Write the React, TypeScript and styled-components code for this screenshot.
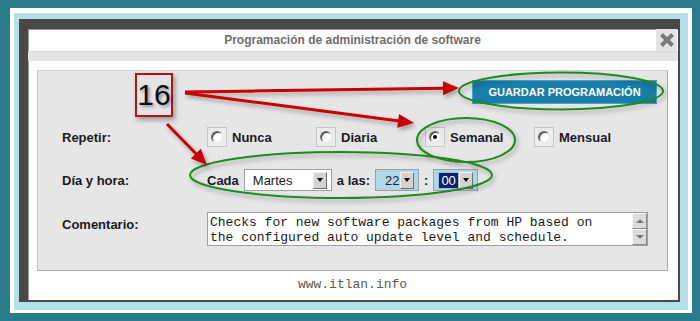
import styled, { createGlobalStyle } from "styled-components";

const GlobalStyle = createGlobalStyle`
  html, body {
    margin: 0;
    padding: 0;
    background: #2a7c8b;
  }
  * {
    box-sizing: border-box;
  }
`;

const Page = styled.div`
  position: relative;
  width: 700px;
  height: 321px;
  background: #2a7c8b;
  padding: 8px 8px 0 10px;
  overflow: hidden;
  font-family: "Liberation Sans", Arial, sans-serif;
`;

const Frame = styled.div`
  width: 682px;
  height: 305px;
  border-style: solid;
  border-color: #ffffff;
  border-width: 5px 4px 3px 4px;
  background: #b6e0e9;
  padding: 6px 8px 8px 5px;
`;

const Dialog = styled.div`
  height: 100%;
  display: flex;
  flex-direction: column;
  background: #ffffff;
  border-style: solid;
  border-color: #484848;
  border-width: 10px 2px 2px 9px;
  box-shadow: inset 1px 1px 0 #9a9a9a;
`;

const TitleBar = styled.div`
  height: 23px;
  display: grid;
  grid-template-columns: 21px 1fr 21px;
  align-items: center;
  padding-right: 1px;
  border-bottom: 1px solid #d9d9d9;
`;

const Title = styled.div`
  grid-column: 2;
  text-align: center;
  font-size: 12px;
  font-weight: bold;
  color: #6e6e6e;
`;

const CloseBox = styled.div`
  width: 21px;
  height: 22px;
  background: #e4e4e4;
  display: flex;
  align-items: center;
  justify-content: center;
`;

const Band = styled.div`
  height: 9px;
  background: #e3e3e3;
`;

const Body = styled.div`
  flex: 1;
  display: flex;
  flex-direction: column;
  padding: 9px 10px 0 9px;
`;

const Panel = styled.div`
  height: 201px;
  background: #e6e6e6;
  border: 1px solid #ababab;
  border-top-color: #d2d2d2;
  border-left-color: #c4c4c4;
  padding: 9px 10px 0 24px;
  display: flex;
  flex-direction: column;
`;

const ButtonRow = styled.div`
  display: flex;
  justify-content: flex-end;
`;

const SaveButton = styled.button`
  width: 185px;
  height: 24px;
  border: 1px solid #4aa3c8;
  background: #167ea8;
  color: #ffffff;
  font-family: "Liberation Sans", Arial, sans-serif;
  font-size: 11px;
  font-weight: bold;
  padding: 0;
`;

const Row = styled.div<{ $top: number; $h: number; $align?: string }>`
  display: flex;
  align-items: ${(p) => p.$align || "center"};
  margin-top: ${(p) => p.$top}px;
  height: ${(p) => p.$h}px;
`;

const Label = styled.div<{ $pt?: number }>`
  width: 145px;
  flex-shrink: 0;
  font-size: 13px;
  font-weight: bold;
  color: #1a1a1a;
  padding-top: ${(p) => p.$pt || 0}px;
  line-height: 15px;
`;

const Option = styled.div`
  width: 109px;
  display: flex;
  align-items: center;
  gap: 5px;
  font-size: 13px;
  font-weight: bold;
  color: #1a1a24;
`;

const RadioBox = styled.span`
  width: 20px;
  height: 20px;
  border: 1px solid #c6c6c6;
  background: #ececec;
  display: flex;
  align-items: center;
  justify-content: center;
`;

const RadioDot = styled.span<{ $checked?: boolean }>`
  position: relative;
  width: 12px;
  height: 12px;
  border-radius: 50%;
  background: #ffffff;
  border: 1px solid;
  border-color: #6a6a6a #e6e6e6 #e6e6e6 #6a6a6a;
  box-shadow: inset 1px 1px 0 #3c3c3c;

  &::after {
    content: "";
    display: ${(p) => (p.$checked ? "block" : "none")};
    position: absolute;
    left: 3px;
    top: 3px;
    width: 4px;
    height: 4px;
    border-radius: 50%;
    background: #000000;
  }
`;

const Inline = styled.div`
  display: flex;
  align-items: center;
  gap: 5px;
  font-size: 13px;
  font-weight: bold;
  color: #1a1a24;
`;

const Select = styled.div<{ $w: number; $tint?: boolean; $pad: number }>`
  width: ${(p) => p.$w}px;
  height: 22px;
  border: 1px solid #a0a0a0;
  background: ${(p) => (p.$tint ? "#acd8e8" : "#ffffff")};
  display: flex;
  align-items: center;
  justify-content: space-between;
  padding: 0 4px 0 ${(p) => p.$pad}px;
  font-size: 13px;
  font-weight: normal;
  color: #222222;
`;

const Highlight = styled.span`
  background: #0a246a;
  color: #ffffff;
  outline: 1px dotted #9aa4c8;
  padding: 0 2px;
  line-height: 15px;
`;

const ArrowBtn = styled.span`
  width: 14px;
  height: 17px;
  background: #d6d3ce;
  border: 1px solid;
  border-color: #f4f4f4 #6e6e6e #6e6e6e #f4f4f4;
  display: flex;
  align-items: center;
  justify-content: center;

  &::after {
    content: "";
    border-top: 4px solid #000000;
    border-left: 3.5px solid transparent;
    border-right: 3.5px solid transparent;
  }
`;

const TextBox = styled.div`
  width: 441px;
  height: 34px;
  border: 1px solid #a0a0a0;
  background: #ffffff;
  display: flex;
`;

const TextContent = styled.div`
  flex: 1;
  padding: 2px 2px;
  font-family: "Liberation Mono", "Courier New", monospace;
  font-size: 13px;
  line-height: 15px;
  color: #1a1a1a;
  white-space: pre;
  overflow: hidden;
`;

const ScrollBar = styled.div`
  width: 15px;
  display: flex;
  flex-direction: column;
`;

const ScrollBtn = styled.span<{ $up?: boolean }>`
  height: 16px;
  background: #dcdcdc;
  border: 1px solid;
  border-color: #f6f6f6 #8a8a8a #8a8a8a #f6f6f6;
  display: flex;
  align-items: center;
  justify-content: center;

  &::after {
    content: "";
    border-left: 4px solid transparent;
    border-right: 4px solid transparent;
    ${(p) =>
      p.$up ? "border-bottom: 4px solid #7a7a7a;" : "border-top: 4px solid #7a7a7a;"}
  }
`;

const Footer = styled.div`
  flex: 1;
  display: flex;
  align-items: center;
  justify-content: center;
  font-family: "Liberation Mono", "Courier New", monospace;
  font-size: 13px;
  color: #5a5a5a;
  padding-bottom: 2px;
`;

const Badge = styled.div`
  position: absolute;
  left: 135px;
  top: 73px;
  width: 38px;
  height: 44px;
  border: 2px solid #b01515;
  background: #e4e4e4;
  box-shadow: 2px 3px 5px rgba(0, 0, 0, 0.35);
  display: flex;
  align-items: center;
  justify-content: center;
  font-family: "Liberation Sans", Arial, sans-serif;
  font-size: 30px;
  color: #0c0c14;
  text-shadow: 2px 2px 3px rgba(0, 0, 0, 0.35);
`;

const Overlay = styled.svg`
  position: absolute;
  left: 0;
  top: 0;
  pointer-events: none;
`;

const arrows = [
  { x1: 185, y1: 92, x2: 459, y2: 88 },
  { x1: 185, y1: 93, x2: 414, y2: 123 },
  { x1: 167, y1: 124, x2: 207, y2: 165 },
];

function Arrow({ x1, y1, x2, y2 }: { x1: number; y1: number; x2: number; y2: number }) {
  const dx = x2 - x1;
  const dy = y2 - y1;
  const d = Math.hypot(dx, dy);
  const ux = dx / d;
  const uy = dy / d;
  const len = 16;
  const hw = 7;
  const bx = x2 - ux * len;
  const by = y2 - uy * len;
  const pts = `${x2},${y2} ${bx - uy * hw},${by + ux * hw} ${bx + uy * hw},${by - ux * hw}`;
  return (
    <g>
      <line x1={x1} y1={y1} x2={bx + ux} y2={by + uy} stroke="#c80000" strokeWidth={3} />
      <polygon points={pts} fill="#c80000" />
    </g>
  );
}

const options = [
  { label: "Nunca" },
  { label: "Diaria" },
  { label: "Semanal", checked: true },
  { label: "Mensual" },
];

export default function App() {
  return (
    <Page>
      <GlobalStyle />
      <Frame>
        <Dialog>
          <TitleBar>
            <Title>Programación de administración de software</Title>
            <CloseBox>
              <svg width="16" height="16" viewBox="0 0 16 16">
                <path d="M2.5 2.5 L13.5 13.5 M13.5 2.5 L2.5 13.5" stroke="#787878" strokeWidth="4" />
              </svg>
            </CloseBox>
          </TitleBar>
          <Band />
          <Body>
            <Panel>
              <ButtonRow>
                <SaveButton>GUARDAR PROGRAMACIÓN</SaveButton>
              </ButtonRow>
              <Row $top={23} $h={20}>
                <Label>Repetir:</Label>
                {options.map((o) => (
                  <Option key={o.label}>
                    <RadioBox>
                      <RadioDot $checked={o.checked} />
                    </RadioBox>
                    {o.label}
                  </Option>
                ))}
              </Row>
              <Row $top={22} $h={22}>
                <Label>Día y hora:</Label>
                <Inline>
                  Cada
                  <Select $w={88} $pad={8}>
                    Martes
                    <ArrowBtn />
                  </Select>
                  a las:
                  <Select $w={44} $pad={9} $tint>
                    22
                    <ArrowBtn />
                  </Select>
                  <span>:</span>
                  <Select $w={45} $pad={5} $tint>
                    <Highlight>00</Highlight>
                    <ArrowBtn />
                  </Select>
                </Inline>
              </Row>
              <Row $top={21} $h={34} $align="flex-start">
                <Label $pt={5}>Comentario:</Label>
                <TextBox>
                  <TextContent>
                    {"Checks for new software packages from HP based on\nthe configured auto update level and schedule."}
                  </TextContent>
                  <ScrollBar>
                    <ScrollBtn $up />
                    <ScrollBtn />
                  </ScrollBar>
                </TextBox>
              </Row>
            </Panel>
            <Footer>www.itlan.info</Footer>
          </Body>
        </Dialog>
      </Frame>

      <Badge>16</Badge>
      <Overlay width="700" height="321" viewBox="0 0 700 321">
        <defs>
          <filter id="shade" x="-10%" y="-30%" width="120%" height="160%">
            <feDropShadow dx="2" dy="3" stdDeviation="2" floodColor="#000" floodOpacity="0.3" />
          </filter>
        </defs>
        <g filter="url(#shade)" fill="none" stroke="#1e8a1e" strokeWidth="2">
          <ellipse cx="561" cy="91" rx="102" ry="18.5" />
          <ellipse cx="466" cy="140" rx="49" ry="22" />
          <ellipse cx="341" cy="175" rx="151" ry="23" />
        </g>
        <g filter="url(#shade)">
          {arrows.map((a, i) => (
            <Arrow key={i} {...a} />
          ))}
        </g>
      </Overlay>
    </Page>
  );
}
